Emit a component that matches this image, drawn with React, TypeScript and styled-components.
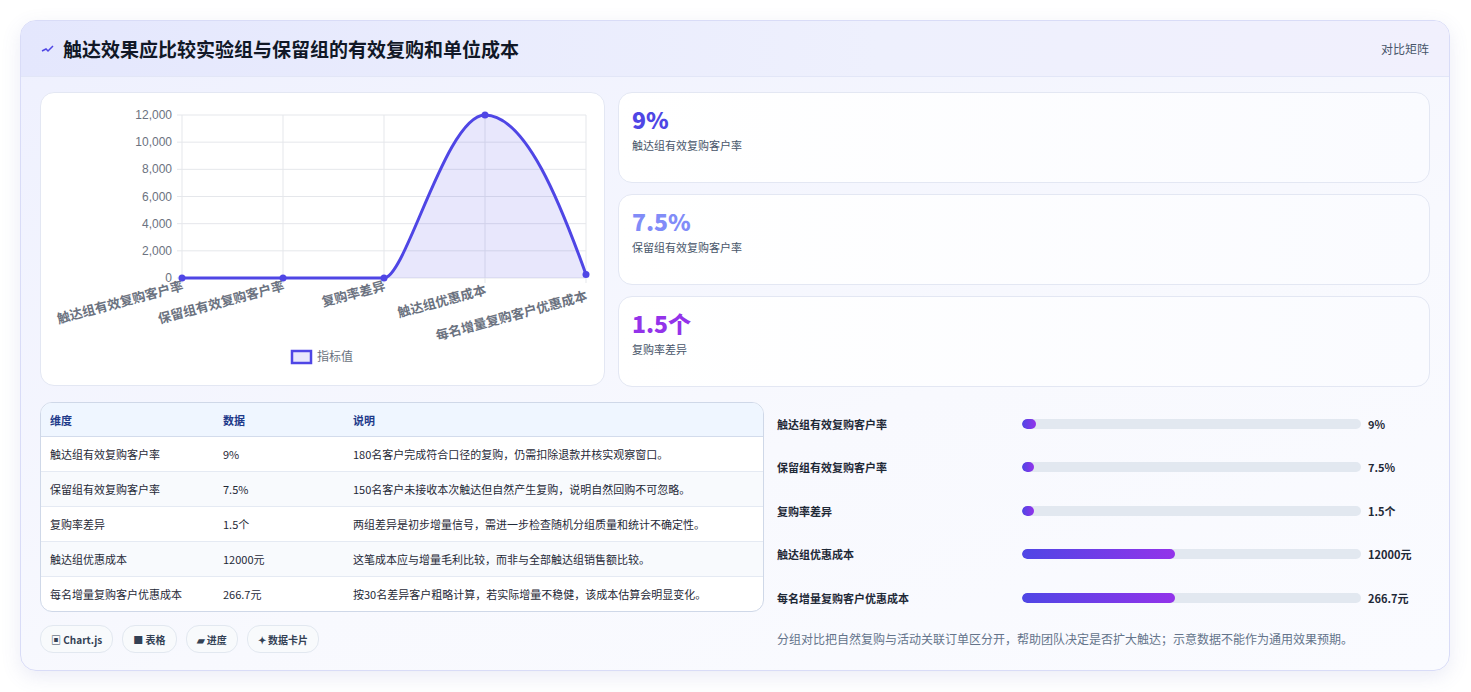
import React from "react";
import styled, { createGlobalStyle } from "styled-components";

const Global = createGlobalStyle`
  html, body { margin: 0; padding: 0; background: #fff; }
  body { font-family: "Noto Sans CJK SC", "Noto Sans", sans-serif; color: #1e293b; }
`;

const Page = styled.div`
  padding: 20px 21px 21px 20px;
  box-sizing: border-box;
  width: 1471px;
  height: 692px;
`;

const Card = styled.div`
  border: 1px solid #d9dcf7;
  border-radius: 16px;
  overflow: hidden;
  background: linear-gradient(160deg, #eef0fe 0%, #f8f9fe 60%, #fafbff 100%);
  box-shadow: 0 6px 20px rgba(90, 100, 180, 0.12);
  height: 651px;
  box-sizing: border-box;
`;

const Header = styled.div`
  height: 55px;
  display: flex;
  align-items: center;
  justify-content: space-between;
  padding: 0 20px 0 20px;
  background: linear-gradient(90deg, #e4e7fd, #eef0fd 60%, #f1f0fd);
  border-bottom: 1px solid #e2e6f7;
`;

const Title = styled.h1`
  margin: 0;
  font-size: 19px;
  font-weight: 700;
  color: #111827;
  display: flex;
  align-items: center;
  gap: 8px;
`;

const Tag = styled.span`
  font-size: 12px;
  color: #475569;
`;

const Body = styled.div`
  padding: 15px 19px 0 19px;
  display: flex;
  flex-direction: column;
  gap: 15px;
`;

const TopRow = styled.div`
  display: grid;
  grid-template-columns: 565px 1fr;
  gap: 13px;
`;

const Panel = styled.div`
  background: #fff;
  border: 1px solid #e3e7f3;
  border-radius: 14px;
  height: 294px;
  box-sizing: border-box;
`;

const Stats = styled.div`
  display: flex;
  flex-direction: column;
  gap: 11px;
`;

const Stat = styled.div`
  height: 91px;
  box-sizing: border-box;
  border: 1px solid #e3e7f3;
  border-radius: 14px;
  background: linear-gradient(90deg, #ffffff, #fafbff);
  padding: 12px 13px;
`;

const StatValue = styled.div<{ $c: string }>`
  font-size: 23px;
  font-weight: 800;
  color: ${(p) => p.$c};
  line-height: 28px;
`;

const StatLabel = styled.div`
  font-size: 11px;
  color: #475569;
  margin-top: 4px;
`;

const BottomRow = styled.div`
  display: grid;
  grid-template-columns: 724px 1fr;
  gap: 13px;
`;

const Left = styled.div`
  display: flex;
  flex-direction: column;
  gap: 13px;
`;

const TableWrap = styled.div`
  border: 1px solid #cfd8e8;
  border-radius: 12px;
  overflow: hidden;
  background: #fff;
`;

const Table = styled.table`
  width: 100%;
  border-collapse: collapse;
  font-size: 11px;
  th, td { text-align: left; padding: 0 9px; height: 34px; }
  th { background: #eff6ff; color: #1e3a8a; font-weight: 600; height: 33px; border-bottom: 1px solid #d3dcec; }
  td { color: #1f2937; border-bottom: 1px solid #e5eaf3; }
  tr:nth-child(even) td { background: #f8fafd; }
  tr:last-child td { border-bottom: none; }
`;

const Chips = styled.div`
  display: flex;
  gap: 9px;
`;

const Chip = styled.span`
  height: 26px;
  padding: 0 10px;
  border-radius: 13px;
  border: 1px solid #e2e8f0;
  background: #f8fafc;
  font-size: 10px;
  font-weight: 600;
  color: #334155;
  display: flex;
  align-items: center;
  gap: 3px;
`;

const Bars = styled.div`
  display: flex;
  flex-direction: column;
`;

const BarRow = styled.div`
  display: grid;
  grid-template-columns: 238px 339px 1fr;
  align-items: center;
  gap: 7px;
  height: 43.5px;
  font-size: 11px;
  font-weight: 600;
  color: #1f2937;
`;

const Track = styled.div`
  height: 10px;
  background: #e2e8f0;
  border-radius: 5px;
  overflow: hidden;
`;

const Fill = styled.div`
  height: 100%;
  border-radius: 5px;
  background: linear-gradient(90deg, #4f46e5, #9333ea);
`;

const Note = styled.p`
  margin: 10px 0 0;
  font-size: 12px;
  color: #64748b;
`;

const stats = [
  { v: "9%", l: "触达组有效复购客户率", c: "#4f46e5" },
  { v: "7.5%", l: "保留组有效复购客户率", c: "#818cf8" },
  { v: "1.5个", l: "复购率差异", c: "#9333ea" },
];

const rows = [
  ["触达组有效复购客户率", "9%", "180名客户完成符合口径的复购，仍需扣除退款并核实观察窗口。", 4],
  ["保留组有效复购客户率", "7.5%", "150名客户未接收本次触达但自然产生复购，说明自然回购不可忽略。", 3.5],
  ["复购率差异", "1.5个", "两组差异是初步增量信号，需进一步检查随机分组质量和统计不确定性。", 3.5],
  ["触达组优惠成本", "12000元", "这笔成本应与增量毛利比较，而非与全部触达组销售额比较。", 45],
  ["每名增量复购客户优惠成本", "266.7元", "按30名差异客户粗略计算，若实际增量不稳健，该成本估算会明显变化。", 45],
] as const;

const xs = [181, 282, 383, 484, 585];
const labels = ["触达组有效复购客户率", "保留组有效复购客户率", "复购率差异", "触达组优惠成本", "每名增量复购客户优惠成本"];
const yTicks = [0, 2000, 4000, 6000, 8000, 10000, 12000];
const yOf = (v: number) => 278 - (v / 12000) * 163;

function Chart() {
  const line = `M181,278 L383,278 C405,278 445,115 484,115 C525,115 560,205 585,274.4`;
  return (
    <svg width="565" height="294" viewBox="40 93 565 294" style={{ display: "block" }}>
      {yTicks.map((t) => (
        <g key={t}>
          <line x1={176} x2={585} y1={yOf(t)} y2={yOf(t)} stroke="#e5e7eb" />
          <text x={171} y={yOf(t) + 4} textAnchor="end" fontSize="12" fill="#6b7280" fontFamily="Liberation Sans, sans-serif">
            {t.toLocaleString("en-US")}
          </text>
        </g>
      ))}
      {xs.map((x) => (
        <line key={x} x1={x} x2={x} y1={115} y2={283} stroke="#e5e7eb" />
      ))}
      <path d={`${line} L585,278 Z`} fill="rgba(79,70,229,0.13)" />
      <path d={line} fill="none" stroke="#4f46e5" strokeWidth="3" />
      {[278, 278, 278, 115, 274.4].map((y, i) => (
        <circle key={i} cx={xs[i]} cy={y} r="3.5" fill="#4f46e5" />
      ))}
      {labels.map((l, i) => (
        <text
          key={l}
          transform={`translate(${xs[i] + 2},${290 + (i === 3 ? 4 : i === 4 ? 10 : 0)}) rotate(-15)`}
          textAnchor="end"
          fontSize="13"
          fontWeight="600"
          fill="#6b7280"
        >
          {l}
        </text>
      ))}
      <rect x={291} y={351} width={19} height={12} fill="rgba(79,70,229,0.13)" stroke="#4f46e5" strokeWidth="2.5" />
      <text x={316} y={361} fontSize="12" fill="#6b7280">指标值</text>
    </svg>
  );
}

export default function App() {
  return (
    <Page>
      <Global />
      <Card>
        <Header>
          <Title>
            <svg width="14" height="10" viewBox="0 0 14 10">
              <path d="M1 7 L5 5 L7 7 L12 2" stroke="#4f46e5" strokeWidth="1.5" fill="none" />
            </svg>
            触达效果应比较实验组与保留组的有效复购和单位成本
          </Title>
          <Tag>对比矩阵</Tag>
        </Header>
        <Body>
          <TopRow>
            <Panel>
              <Chart />
            </Panel>
            <Stats>
              {stats.map((s) => (
                <Stat key={s.l}>
                  <StatValue $c={s.c}>{s.v}</StatValue>
                  <StatLabel>{s.l}</StatLabel>
                </Stat>
              ))}
            </Stats>
          </TopRow>
          <BottomRow>
            <Left>
              <TableWrap>
                <Table>
                  <thead>
                    <tr>
                      <th style={{ width: 155 }}>维度</th>
                      <th style={{ width: 112 }}>数据</th>
                      <th>说明</th>
                    </tr>
                  </thead>
                  <tbody>
                    {rows.map((r) => (
                      <tr key={r[0]}>
                        <td>{r[0]}</td>
                        <td>{r[1]}</td>
                        <td>{r[2]}</td>
                      </tr>
                    ))}
                  </tbody>
                </Table>
              </TableWrap>
              <Chips>
                <Chip>▣ Chart.js</Chip>
                <Chip>■ 表格</Chip>
                <Chip>▰ 进度</Chip>
                <Chip>✦ 数据卡片</Chip>
              </Chips>
            </Left>
            <div>
              <Bars>
                {rows.map((r) => (
                  <BarRow key={r[0]}>
                    <span>{r[0]}</span>
                    <Track>
                      <Fill style={{ width: `${r[3]}%` }} />
                    </Track>
                    <span>{r[1]}</span>
                  </BarRow>
                ))}
              </Bars>
              <Note>分组对比把自然复购与活动关联订单区分开，帮助团队决定是否扩大触达；示意数据不能作为通用效果预期。</Note>
            </div>
          </BottomRow>
        </Body>
      </Card>
    </Page>
  );
}
